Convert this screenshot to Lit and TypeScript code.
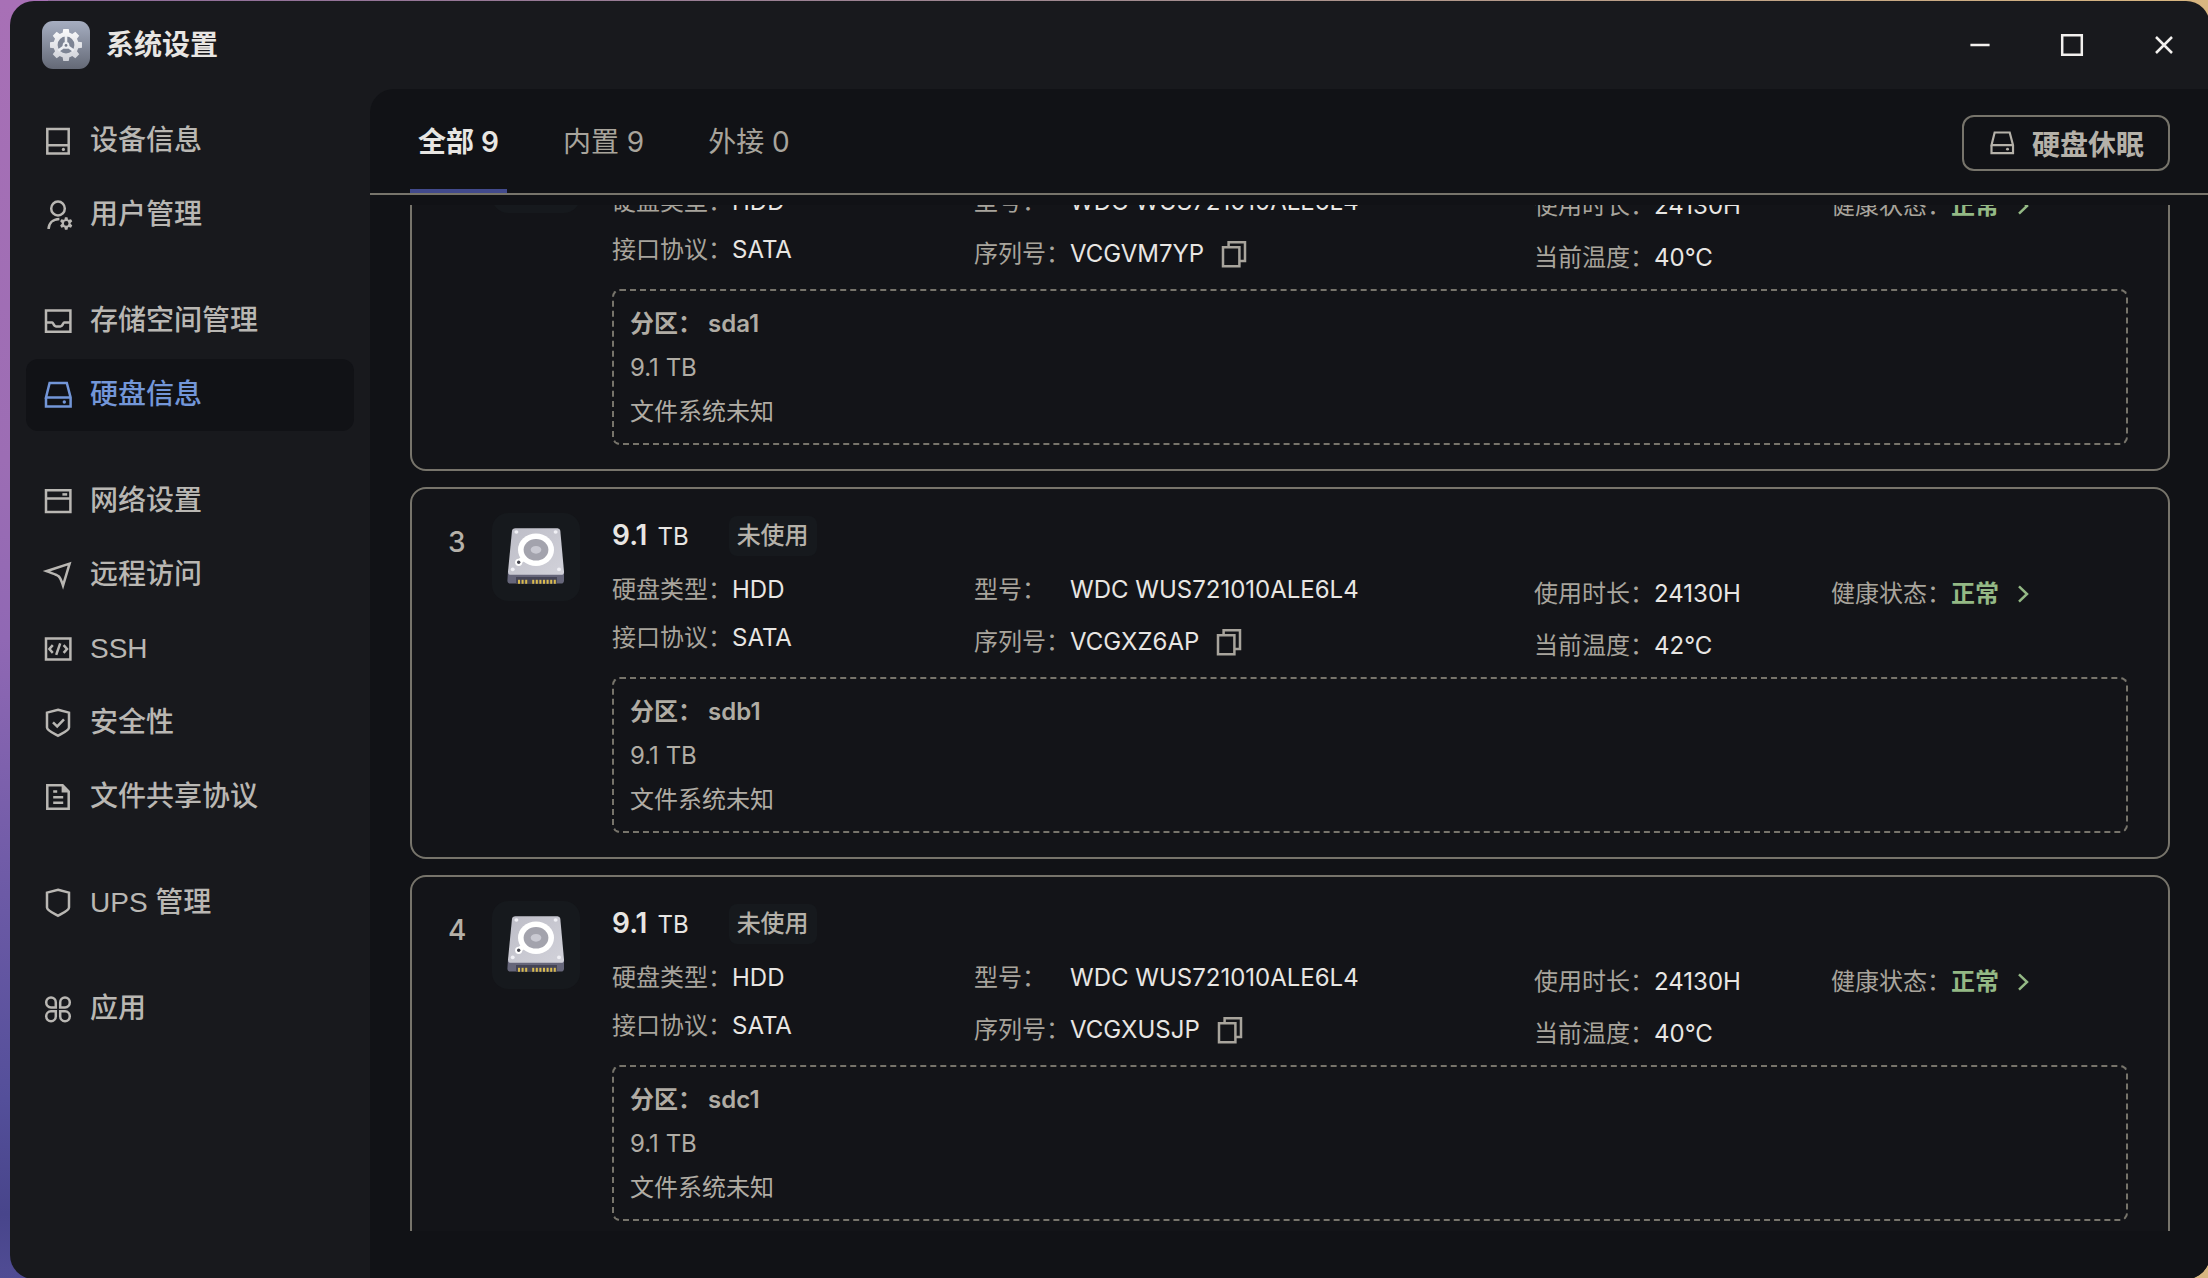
import { LitElement, html, css, svg, nothing, type SVGTemplateResult } from "lit";
import { customElement, property } from "lit/decorators.js";
import { classMap } from "lit/directives/class-map.js";

/** Outline of a toothed wheel with trapezoid teeth. */
function gearPath(cx: number, cy: number, outer: number, body: number, teeth: number, tipHalf: number, rootHalf: number): string {
  const at = (radius: number, angle: number) =>
    `${(cx + radius * Math.sin(angle)).toFixed(2)} ${(cy - radius * Math.cos(angle)).toFixed(2)}`;
  let d = "";
  for (let i = 0; i < teeth; i++) {
    const a = (i * 2 * Math.PI) / teeth;
    const next = ((i + 1) * 2 * Math.PI) / teeth;
    d += `${i === 0 ? "M" : "L"}${at(body, a - rootHalf)}L${at(outer, a - tipHalf)}L${at(outer, a + tipHalf)}L${at(body, a + rootHalf)}`;
    d += `A${body} ${body} 0 0 1 ${at(body, next - rootHalf)}`;
  }
  return d + "Z";
}

const shield = svg`<path d="M16 2.8 27 5.6V20.4C27 23.4 19.5 26.6 16 28.8 12.5 26.6 5 23.4 5 20.4V5.6Z"/>`;
const disk = svg`
  <path d="M4 18.5V27.5H28.6V18.5L24.8 4H7.6L4 18.5H28.6"/>
  <circle class="dot" cx="22.3" cy="23" r="1.7"/>`;

const icons: Record<string, SVGTemplateResult> = {
  device: svg`<path d="M5.3 4H26.7V28.4H5.3ZM5.3 20.3H26.7"/><circle class="dot" cx="21.4" cy="24.4" r="1.6"/>`,
  user: svg`
    <ellipse cx="16" cy="9.5" rx="6.8" ry="7"/>
    <path d="M6.6 30C6.8 24.4 10.6 20.2 17.4 20"/>
    <path class="dot" fill-rule="evenodd" d="${gearPath(24.2, 24.4, 6.4, 4.4, 6, 0.2, 0.42)}M24.2 22.1a2.3 2.3 0 1 0 0 4.6 2.3 2.3 0 0 0 0-4.6Z"/>`,
  storage: svg`<path d="M4 5.6H28.4V26.8H4ZM4 17.4H10.2C11.4 17.4 11.4 21.4 14 21.4H18.4C21 21.4 21 17.4 22.2 17.4H28.4"/>`,
  disk,
  network: svg`<path d="M4 5.3H28.4V27H4ZM4 13.6H28.4"/><path d="M20.4 9.4H25.2"/>`,
  send: svg`<path d="M27.6 4.6 4.4 12.2C10 14.4 14.6 15.4 16.6 17.2 18.8 19.2 19.6 22.4 21 26.6Z"/>`,
  code: svg`<path d="M4 5.4H28.4V26.6H4Z"/><path d="M10.8 12.2 7.4 16 10.8 19.8M21.6 12.2 25 16 21.6 19.8M18.2 10.4 14.2 21.8"/>`,
  security: svg`${shield}<path d="M11 15.4 15.2 19.4 22 12.4"/>`,
  file: svg`<path d="M5.3 4.3H20.6L26.7 10.4V27.7H5.3Z"/><path class="dot" d="M19.6 3 28 11.4H19.6Z"/><path d="M11.2 10.4H15.2M11.2 16.2H21.2M11.2 21.8H21.2"/>`,
  shield,
  apps: svg`
    <path d="M13.8 14.4H8.9A4.8 5 0 1 1 13.8 9.4Z"/>
    <path d="M18.2 14.4H23.1A4.8 5 0 1 0 18.2 9.4Z"/>
    <path d="M13.8 18.2H8.9A4.8 5 0 1 0 13.8 23.2Z"/>
    <path d="M18.2 18.2H23.1A4.8 5 0 1 1 18.2 23.2Z"/>`,
  copy: svg`<path d="M5 9.2H21.4V28.2H5Z"/><path d="M10.6 9V4.2H27V23H21.6"/>`,
  minimize: svg`<path d="M6.4 16H25.6"/>`,
  maximize: svg`<path d="M6.2 6.2H25.8V25.8H6.2Z"/>`,
  close: svg`<path d="M8 8 24 24M24 8 8 24"/>`,
  chevron: svg`<path d="M12 8.4 20 16 12 23.6"/>`,
};

@customElement("ui-icon")
class UiIcon extends LitElement {
  @property() name = "";

  static styles = css`
    :host { display: block; flex: none; width: 32px; height: 32px; }
    .glyph { display: block; width: 100%; height: 100%; fill: none; stroke: currentColor; stroke-width: 2.5; }
    .dot { fill: currentColor; stroke: none; }
  `;

  render() {
    return html`<svg class="glyph" viewBox="0 0 32 32" aria-hidden="true">${icons[this.name] ?? nothing}</svg>`;
  }
}

@customElement("app-logo")
class AppLogo extends LitElement {
  static styles = css`
    :host { display: block; flex: none; width: 48px; height: 48px; }
    .logo { display: block; width: 100%; height: 100%; }
  `;

  render() {
    return html`
      <svg class="logo" viewBox="0 0 48 48" aria-hidden="true">
        <defs>
          <linearGradient id="plate" x1="0" y1="0" x2="0" y2="1">
            <stop offset="0" stop-color="#a6aec1" />
            <stop offset="1" stop-color="#646976" />
          </linearGradient>
          <linearGradient id="wheel" x1="0" y1="0" x2="0" y2="1">
            <stop offset="0" stop-color="#fafafb" />
            <stop offset="1" stop-color="#cfd1d8" />
          </linearGradient>
        </defs>
        <rect width="48" height="48" rx="11" fill="url(#plate)" />
        <path d=${gearPath(24, 24, 16.2, 12.6, 8, 0.17, 0.27)} fill="url(#wheel)" />
        <circle cx="24" cy="24" r="8.4" fill="#7d8494" />
        <path d="M24 15V22M22.4 25.4 16.4 29.6M25.6 25.4 31.6 29.6" stroke="#eceef2" stroke-width="2.6" />
        <circle cx="24" cy="24.4" r="3.4" fill="#eceef2" />
        <circle cx="24" cy="24.4" r="1.4" fill="#767c8b" />
      </svg>
    `;
  }
}

@customElement("drive-art")
class DriveArt extends LitElement {
  static styles = css`
    :host { display: block; flex: none; width: 88px; height: 88px; border-radius: 16px; background: #16191d; }
    .drive { display: block; width: 100%; height: 100%; }
  `;

  render() {
    const pins = [26, 29.6, 33.2, 40.2, 43.8, 47.4, 51, 54.6, 58.2, 61.8];
    return html`
      <svg class="drive" viewBox="0 0 88 88" aria-hidden="true">
        <defs>
          <linearGradient id="top" x1="0" y1="0" x2="1" y2="1">
            <stop offset="0" stop-color="#bdbdc7" />
            <stop offset="1" stop-color="#d2d2da" />
          </linearGradient>
        </defs>
        <path d="M16 58H72V67.5Q72 70.6 69 70.6H18.5Q15.4 70.6 15.4 67.5Z" fill="#66667a" />
        <path d="M24 64H65V70.6H24Z" fill="#444455" />
        ${pins.map((x) => svg`<rect x=${x} y="66.8" width="2" height="4" fill="#d9bb4e" />`)}
        <path d="M23.5 15.3H65.5Q68 15.3 68.3 17.8L72 58.5Q72.2 61.8 69 61.8H19Q15.8 61.8 16 58.5L20 17.8Q20.3 15.3 23.5 15.3Z" fill="url(#top)" />
        <g fill="#f0f0f5">
          <ellipse cx="24.4" cy="19" rx="2" ry="1.8" />
          <ellipse cx="63.6" cy="19" rx="2" ry="1.8" />
          <ellipse cx="20.7" cy="56.4" rx="2" ry="1.8" />
          <ellipse cx="67" cy="56.4" rx="2" ry="1.8" />
        </g>
        <path d="M27 49 34 43" stroke="#fff" stroke-width="5" stroke-linecap="round" />
        <circle cx="26.7" cy="49.3" r="3.6" fill="#fff" />
        <circle cx="26.7" cy="49.3" r="1.7" fill="#44444e" />
        <ellipse cx="44" cy="36.8" rx="18" ry="16.2" fill="#fff" />
        <ellipse cx="44" cy="36.8" rx="12.4" ry="10.8" fill="#a3a3ad" />
        <ellipse cx="44" cy="36.8" rx="5.3" ry="3.9" fill="#c9c9d2" />
      </svg>
    `;
  }
}

interface Disk {
  slot: number;
  serial: string;
  temperature: string;
  partition: string;
}

const disks: Disk[] = [
  { slot: 2, serial: "VCGVM7YP", temperature: "40°C", partition: "sda1" },
  { slot: 3, serial: "VCGXZ6AP", temperature: "42°C", partition: "sdb1" },
  { slot: 4, serial: "VCGXUSJP", temperature: "40°C", partition: "sdc1" },
];

@customElement("disk-card")
class DiskCard extends LitElement {
  @property({ attribute: false }) disk!: Disk;

  static styles = css`
    :host { display: block; }
    .card {
      display: flex;
      box-sizing: border-box;
      padding: 24px 40px 24px 36px;
      border: 2px solid #77746b;
      border-radius: 16px;
      background: #131418;
      color: #a8a49c;
      font-size: 24px;
      line-height: 36px;
    }
    .slot { flex: none; width: 44px; padding-top: 9px; font-size: 28px; line-height: 40px; font-weight: 500; color: #b5b1a9; }
    .body { flex: 1; min-width: 0; margin-left: 32px; padding-top: 3px; }
    .title { display: flex; align-items: center; gap: 40px; height: 40px; color: #e8e6e3; }
    .size { display: flex; align-items: baseline; gap: 10px; margin: 0; font-size: 24px; font-weight: 400; }
    .amount { font-size: 28px; font-weight: 600; }
    .badge { padding: 0 8px; border-radius: 8px; background: #16191d; color: #b5b1a9; line-height: 40px; font-weight: 500; }
    .details { display: grid; grid-template-columns: 362fr 560fr 297fr 297fr; margin: 16px 0 11px; }
    .group { display: flex; flex-direction: column; gap: 12px; margin: 0; }
    .wide { gap: 16px; }
    .low { padding-top: 4px; padding-bottom: 2px; }
    .field { display: flex; align-items: center; white-space: nowrap; }
    .name { min-width: 96px; }
    .value { display: flex; align-items: center; margin: 0; color: #e8e6e3; }
    .copy, .health {
      display: flex; align-items: center; padding: 0; border: 0; background: none; font: inherit; cursor: pointer;
    }
    .copy { margin-left: 14px; color: #a8a49c; }
    .health { gap: 8px; color: #94b985; font-weight: 600; }
    .partition { padding: 11px 16px 9px; border: 2px dashed #77746b; border-radius: 8px; line-height: 44px; color: #b0aca4; }
    .line { margin: 0; }
    .strong { font-weight: 600; }
  `;

  private field(name: string, value: unknown) {
    return html`<div class="field"><dt class="name">${name}：</dt><dd class="value">${value}</dd></div>`;
  }

  render() {
    const d = this.disk;
    return html`
      <article class="card">
        <div class="slot">${d.slot}</div>
        <drive-art></drive-art>
        <div class="body">
          <div class="title">
            <h2 class="size"><span class="amount">9.1</span><span>TB</span></h2>
            <span class="badge">未使用</span>
          </div>
          <div class="details">
            <dl class="group">
              ${this.field("硬盘类型", "HDD")}
              ${this.field("接口协议", "SATA")}
            </dl>
            <dl class="group wide">
              ${this.field("型号", "WDC WUS721010ALE6L4")}
              ${this.field("序列号", html`${d.serial}<button class="copy" aria-label="复制"><ui-icon name="copy"></ui-icon></button>`)}
            </dl>
            <dl class="group wide low">
              ${this.field("使用时长", "24130H")}
              ${this.field("当前温度", d.temperature)}
            </dl>
            <dl class="group wide low">
              ${this.field("健康状态", html`<button class="health">正常<ui-icon name="chevron"></ui-icon></button>`)}
            </dl>
          </div>
          <section class="partition">
            <p class="line strong">分区： ${d.partition}</p>
            <p class="line">9.1 TB</p>
            <p class="line">文件系统未知</p>
          </section>
        </div>
      </article>
    `;
  }
}

const menu: { icon: string; label: string; current?: boolean }[][] = [
  [{ icon: "device", label: "设备信息" }, { icon: "user", label: "用户管理" }],
  [{ icon: "storage", label: "存储空间管理" }, { icon: "disk", label: "硬盘信息", current: true }],
  [
    { icon: "network", label: "网络设置" },
    { icon: "send", label: "远程访问" },
    { icon: "code", label: "SSH" },
    { icon: "security", label: "安全性" },
    { icon: "file", label: "文件共享协议" },
  ],
  [{ icon: "shield", label: "UPS 管理" }],
  [{ icon: "apps", label: "应用" }],
];

const tabs = [
  { label: "全部 9", selected: true },
  { label: "内置 9", selected: false },
  { label: "外接 0", selected: false },
];

@customElement("app-root")
class AppRoot extends LitElement {
  static styles = css`
    :host {
      display: flex;
      height: 100vh;
      overflow: hidden;
      background:
        linear-gradient(#a870b6, #9c6db4 36%, #9068b4 50%, #6c5aa6 70%, #544f9a 86%, #48458b 95%, #504c94) 0 0 / 48px 100% no-repeat,
        linear-gradient(90deg, #8f6a9c, #a08a90 50%, #d8b680);
      font-family: Inter, "Noto Sans CJK SC", sans-serif;
      color: #b9b7b3;
    }
    .window {
      flex: 1;
      display: flex;
      flex-direction: column;
      min-width: 0;
      margin: 1px -2px -1px 10px;
      border-radius: 24px;
      overflow: hidden;
      background: #18191d;
    }
    .titlebar { flex: none; display: flex; align-items: center; gap: 16px; height: 88px; padding: 0 30px 0 32px; }
    .heading { flex: 1; margin: 0; font-size: 28px; line-height: 40px; font-weight: 600; color: #e8e6e3; }
    .controls { display: flex; gap: 60px; color: #f2f0ee; }
    .control { padding: 0; border: 0; background: none; color: inherit; cursor: pointer; }
    .main { flex: 1; display: flex; min-height: 0; }
    .sidebar { flex: none; box-sizing: border-box; width: 360px; padding: 16px; display: flex; flex-direction: column; gap: 34px; }
    .section { display: flex; flex-direction: column; gap: 2px; margin: 0; padding: 0; list-style: none; }
    .link {
      display: flex; align-items: center; gap: 16px; height: 72px; padding: 0 16px; border-radius: 12px;
      color: inherit; font-size: 28px; line-height: 40px; text-decoration: none;
    }
    .label { font-family: "Liberation Sans", "Noto Sans CJK SC", sans-serif; font-weight: 500; }
    .current { background: #111216; color: #7396d8; }
    .panel {
      flex: 1; min-width: 0; display: flex; flex-direction: column; gap: 10px;
      padding-bottom: 48px; border-top-left-radius: 24px; background: #111216;
    }
    .toolbar {
      flex: none; display: flex; align-items: flex-start; justify-content: space-between;
      padding: 26px 40px 0; border-bottom: 2px solid #77746b;
    }
    .tabs { display: flex; gap: 48px; }
    .tab {
      box-sizing: border-box; height: 78px; padding: 0 8px 20px; border: 0; border-bottom: 4px solid transparent;
      background: none; color: #a8a49c; font: inherit; font-size: 28px; line-height: 54px; cursor: pointer;
    }
    .selected { border-bottom-color: #424a8c; color: #e8e6e3; font-weight: 600; }
    .sleep {
      display: flex; align-items: center; gap: 16px; box-sizing: border-box; height: 56px; padding: 0 24px;
      border: 2px solid #77746b; border-radius: 12px; background: none; color: #b5b1a9;
      font: inherit; font-size: 28px; font-weight: 600; cursor: pointer;
    }
    .small { width: 28px; height: 28px; }
    .list {
      flex: 1; min-height: 0; display: flex; flex-direction: column; gap: 16px;
      padding: 0 40px; overflow-y: auto; scrollbar-width: none;
    }
  `;

  firstUpdated() {
    const list = this.renderRoot.querySelector(".list") as HTMLElement;
    const cards = [...list.querySelectorAll("disk-card")] as DiskCard[];
    Promise.all(cards.map((card) => card.updateComplete)).then(() => {
      list.scrollTop = 106;
    });
  }

  render() {
    return html`
      <div class="window">
        <header class="titlebar">
          <app-logo></app-logo>
          <h1 class="heading">系统设置</h1>
          <div class="controls">
            <button class="control" aria-label="最小化"><ui-icon name="minimize"></ui-icon></button>
            <button class="control" aria-label="最大化"><ui-icon name="maximize"></ui-icon></button>
            <button class="control" aria-label="关闭"><ui-icon name="close"></ui-icon></button>
          </div>
        </header>
        <div class="main">
          <nav class="sidebar">
            ${menu.map(
              (section) => html`
                <ul class="section">
                  ${section.map(
                    (item) => html`
                      <li>
                        <a class=${classMap({ link: true, current: !!item.current })} href="#" aria-current=${item.current ? "page" : nothing}>
                          <ui-icon name=${item.icon}></ui-icon><span class="label">${item.label}</span>
                        </a>
                      </li>
                    `,
                  )}
                </ul>
              `,
            )}
          </nav>
          <main class="panel">
            <div class="toolbar">
              <div class="tabs" role="tablist">
                ${tabs.map(
                  (tab) => html`
                    <button class=${classMap({ tab: true, selected: tab.selected })} role="tab" aria-selected=${tab.selected ? "true" : "false"}>${tab.label}</button>
                  `,
                )}
              </div>
              <button class="sleep"><ui-icon class="small" name="disk"></ui-icon>硬盘休眠</button>
            </div>
            <div class="list">${disks.map((disk) => html`<disk-card .disk=${disk}></disk-card>`)}</div>
          </main>
        </div>
      </div>
    `;
  }
}
